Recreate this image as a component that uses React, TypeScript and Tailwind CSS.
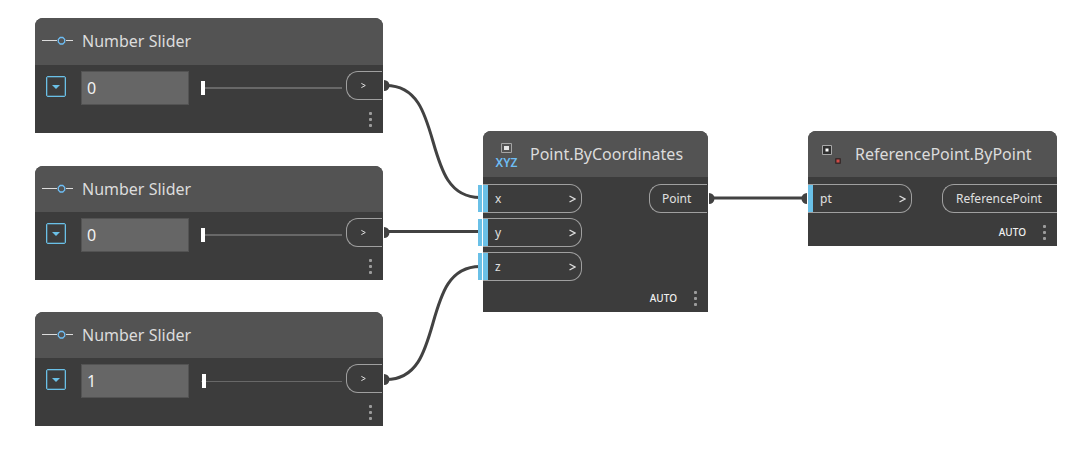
import { useState, type ReactNode } from "react";

function MoreDots() {
  return (
    <button type="button" aria-label="More options" className="flex flex-col gap-[3px]">
      <span className="size-[3px] rounded-[1px] bg-[#9c9c9c]" />
      <span className="size-[3px] rounded-[1px] bg-[#9c9c9c]" />
      <span className="size-[3px] rounded-[1px] bg-[#9c9c9c]" />
    </button>
  );
}

function Node({ place, header, icon, title, children }: {
  place: string;
  header: string;
  icon: ReactNode;
  title: string;
  children: ReactNode;
}) {
  return (
    <section className={`absolute flex flex-col rounded-t-lg bg-[#3c3c3c] ${place}`}>
      <header className={`flex shrink-0 items-center rounded-t-lg bg-[#535353] ${header}`}>
        <span className="flex w-[47px] shrink-0 justify-center">{icon}</span>
        <h2 className="whitespace-nowrap text-base leading-6 text-[#dcdcdc]">{title}</h2>
      </header>
      {children}
    </section>
  );
}

function SliderIcon() {
  return (
    <svg width="33" height="10" viewBox="0 0 33 10" fill="none" aria-hidden="true">
      <path d="M0 4.500h15M24 4.500h7" stroke="#dcdcdc" strokeWidth="1" shapeRendering="crispEdges" />
      <path d="M18.200 1.500h2.600l1.900 1.900v2.700L20.800 8h-2.600l-1.900-1.900V3.400z" stroke="#6ebef5" strokeWidth="1.300" />
    </svg>
  );
}

function XyzIcon() {
  return (
    <span className="flex flex-col items-center pt-2">
      <svg width="11" height="10" viewBox="0 0 11 10" fill="none" aria-hidden="true">
        <path d="M.5.5h10v9H.5z" stroke="#a5a5a5" />
        <path d="M3 3h5v4H3z" fill="#e6e6e6" />
      </svg>
      <span className="text-xs font-semibold leading-5 text-[#6ebef5]">XYZ</span>
    </span>
  );
}

function ReferenceIcon() {
  return (
    <svg width="21" height="20" viewBox="0 0 21 20" fill="none" aria-hidden="true">
      <path d="M1.500 1.500h9v9h-9z" stroke="#a8a8a8" />
      <path d="M2 2h8v8H2z" fill="#303030" />
      <path d="M4.500 4.500h3v3h-3z" fill="#fff" />
      <rect x="14" y="14" width="6" height="6" rx="1" fill="#382c2c" />
      <path d="M15.500 15.500h3v3h-3z" fill="#d24b46" />
    </svg>
  );
}

function OutPort({ children, className }: { children: ReactNode; className: string }) {
  return (
    <button
      type="button"
      className={`flex h-[29px] shrink-0 items-center rounded-l-xl border border-r-0 border-[#a0a0a0] text-[#e0e0e0] ${className}`}
    >
      {children}
    </button>
  );
}

function InPort({ name, width, linked }: { name: string; width: string; linked?: boolean }) {
  return (
    <button
      type="button"
      className={`relative flex h-[29px] items-center justify-between rounded-r-xl border border-l-0 border-[#a0a0a0] pr-[5px] text-xs text-[#e0e0e0] ${width}`}
    >
      {linked && <span className="absolute top-0 right-full mr-px h-[27px] w-1 bg-[#6ac0e7]" />}
      <span className="flex items-center">
        <span className="mr-[7px] h-[27px] w-[5px] bg-[#6ac0e7]" />
        {name}
      </span>
      <Chevron size="h-2 w-[7px]" />
    </button>
  );
}

function Chevron({ size }: { size: string }) {
  return (
    <svg className={size} viewBox="0 0 7 8" fill="none" aria-hidden="true">
      <path d="M.5 1 6 4 .5 7" stroke="#dcdcdc" strokeWidth="1.400" />
    </svg>
  );
}

function NumberSlider({ place, header, track, initial }: {
  place: string;
  header: string;
  track: string;
  initial: number;
}) {
  const [value, setValue] = useState(initial);
  return (
    <Node place={place} header={header} icon={<SliderIcon />} title="Number Slider">
      <div className="flex h-[68px] flex-col justify-between pt-1.5 pb-1.5">
        <div className="flex items-start pl-[11px] pr-px">
          <button
            type="button"
            aria-label="Slider range"
            className="mt-[5px] flex h-[21px] w-5 items-center justify-center rounded-[2px] border border-[#6ac0e7] ring-1 ring-inset ring-[#6ac0e7]/30"
          >
            <svg width="8" height="4" viewBox="0 0 8 4" aria-hidden="true">
              <path d="M0 0h8L4 4z" fill="#6ac0e7" />
            </svg>
          </button>
          <input
            aria-label="Value"
            value={value}
            onChange={(e) => setValue(Number(e.target.value) || 0)}
            className="ml-[15px] h-[34px] w-[108px] border border-[#535353] bg-[#666666] px-[5px] text-base text-[#f2f2f2]"
          />
          <div className="relative ml-3 flex h-[34px] min-w-0 flex-1 items-center">
            <span className={`absolute inset-x-0 bg-[#686868] ${track}`} />
            <input
              type="range"
              aria-label="Number"
              min={0}
              max={100}
              value={value}
              onChange={(e) => setValue(Number(e.target.value))}
              className="relative h-3.5 w-full appearance-none bg-transparent [&::-webkit-slider-thumb]:h-3.5 [&::-webkit-slider-thumb]:w-1 [&::-webkit-slider-thumb]:appearance-none [&::-webkit-slider-thumb]:bg-white"
            />
          </div>
          <OutPort className="ml-1 w-9 pl-3.5">
            <Chevron size="h-[7px] w-[5px]" />
          </OutPort>
        </div>
        <div className="flex justify-end pr-[11px]">
          <MoreDots />
        </div>
      </div>
    </Node>
  );
}

function NodeFooter() {
  return (
    <footer className="flex items-center justify-end gap-[17px] pr-[11px]">
      <span className="text-[10px] font-medium leading-4 text-[#f0f0f0]">AUTO</span>
      <MoreDots />
    </footer>
  );
}

function Wires() {
  return (
    <svg className="absolute inset-0 h-full w-full" fill="none" aria-hidden="true">
      <g stroke="#424242" strokeWidth="3">
        <path d="M386 85.500C448 85.500 418 197.500 480 197.500" />
        <path d="M386 231.500H480" />
        <path d="M386 379.500C448 379.500 418 266.500 480 266.500" />
        <path d="M711 198H806" />
      </g>
      <g fill="#424242">
        <path d="M384 80a5.500 5.500 0 0 1 0 11z" />
        <path d="M384 227a5.500 5.500 0 0 1 0 11z" />
        <path d="M384 374a5.500 5.500 0 0 1 0 11z" />
        <path d="M709 193a5.500 5.500 0 0 1 0 11z" />
        <path d="M807 193a5.500 5.500 0 0 0 0 11z" />
      </g>
    </svg>
  );
}

export default function App() {
  return (
    <main className="relative min-h-screen bg-white font-['Noto_Sans',sans-serif]">
      <Wires />
      <NumberSlider place="left-[35px] top-[18px] w-[348px]" header="h-[47px] pb-px" track="h-0.5" initial={0} />
      <NumberSlider place="left-[35px] top-[166px] w-[348px]" header="h-[46px]" track="h-0.5" initial={0} />
      <NumberSlider place="left-[35px] top-[312px] w-[348px]" header="h-[46px]" track="h-px" initial={1} />

      <Node place="left-[483px] top-[131px] w-[225px]" header="h-[46px]" icon={<XyzIcon />} title="Point.ByCoordinates">
        <div className="flex items-start justify-between pt-[7px] pr-px">
          <div className="flex flex-col gap-[5px]">
            <InPort name="x" width="w-[99px]" linked />
            <InPort name="y" width="w-[99px]" linked />
            <InPort name="z" width="w-[99px]" linked />
          </div>
          <OutPort className="w-[58px] pl-3 text-xs">Point</OutPort>
        </div>
        <div className="pt-[9px] pb-1.5">
          <NodeFooter />
        </div>
      </Node>

      <Node place="left-[808px] top-[131px] w-[249px]" header="h-[46px]" icon={<ReferenceIcon />} title="ReferencePoint.ByPoint">
        <div className="flex items-start justify-between pt-[7px]">
          <InPort name="pt" width="w-[104px]" />
          <OutPort className="w-[115px] pl-[13px] text-xs">ReferencePoint</OutPort>
        </div>
        <div className="pt-[11px] pb-1.5">
          <NodeFooter />
        </div>
      </Node>
    </main>
  );
}
